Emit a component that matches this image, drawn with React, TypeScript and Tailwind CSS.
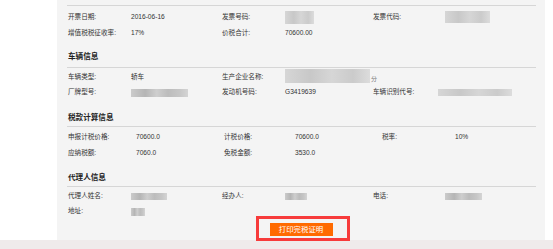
import React from "react";

const Blur = ({ w, h, dy = 0, light = false }: { w: number; h: number; dy?: number; light?: boolean }) => (
  <div
    className={
      "blur-[0.6px] " +
      (light
        ? "bg-[linear-gradient(90deg,#d6d6d6,#c8c8c8_30%,#d6d6d6_55%,#cbcbcb_80%,#dcdcdc)]"
        : "bg-[linear-gradient(90deg,#cbcbcb,#b5b5b5_25%,#cecece_45%,#bcbcbc_65%,#c6c6c6_85%,#d4d4d4)]")
    }
    style={{ width: w, height: h, marginTop: dy }}
  />
);

type Cell = React.ReactNode;

const Row = ({ cells, tax = false, h = "h-[15px]" }: { cells: Cell[]; tax?: boolean; h?: string }) => (
  <div
    className={
      "grid items-center text-[6.6px] leading-none text-[#333] " +
      h +
      " " +
      (tax ? "grid-cols-[68px_88px_71px_87px_73px_1fr]" : "grid-cols-[63px_91px_63px_88px_72px_1fr]")
    }
  >
    {cells.map((c, i) => (
      <div key={i} className="flex items-center whitespace-nowrap">
        {c}
      </div>
    ))}
  </div>
);

const Heading = ({ children, mt }: { children: React.ReactNode; mt: string }) => (
  <div className={"flex h-[14px] items-center text-[7.6px] font-bold leading-none text-[#222] " + mt}>{children}</div>
);

const Line = ({ mt }: { mt: string }) => <div className={"ml-[-1px] mr-[9px] h-px bg-[#d6d6d6] " + mt} />;

export default function App() {
  return (
    <div
      className="flex h-[249px] w-[553px] flex-col bg-white"
      style={{ fontFamily: '"Liberation Sans", "Noto Sans CJK SC", sans-serif' }}
    >
      <div className="flex h-[240px]">
        <div className="w-[57px] bg-white" />
        <div className="flex w-[488px] flex-col bg-[#f4f4f4] pl-[11px]">
          <div className="h-[5px]" />
          <Line mt="" />
          <div className="mt-[3px]">
            <Row h="h-[16px]" cells={["开票日期:", "2016-06-16", "发票号码:", <Blur w={29} h={13} light />, "发票代码:", <Blur w={45} h={12} light />]} />
            <Row h="h-[16px]" cells={["增值税税征收率:", "17%", "价税合计:", "70600.00", "", ""]} />
          </div>
          <Heading mt="mt-[9px]">车辆信息</Heading>
          <Line mt="mt-[3px]" />
          <div className="mt-[2px]">
            <Row
              cells={[
                "车辆类型:",
                "轿车",
                "生产企业名称:",
                <div className="flex items-center">
                  <Blur w={85} h={14} dy={-4} light />
                  <span className="ml-[1px] mt-[2px] text-[6px] text-[#777]">分</span>
                </div>,
                "",
                "",
              ]}
            />
            <Row cells={["厂牌型号:", <Blur w={57} h={8} />, "发动机号码:", "G3419639", "车辆识别代号:", <div className="-ml-[7px]"><Blur w={74} h={7} light /></div>]} />
          </div>
          <Heading mt="mt-[11px]">税款计算信息</Heading>
          <Line mt="mt-[1px]" />
          <div className="mt-[3px]">
            <Row tax cells={["申报计税价格:", "70600.0", "计税价格:", "70600.0", "税率:", "10%"]} />
            <Row tax h="h-[16px]" cells={["应纳税额:", "7060.0", "免税金额:", "3530.0", "", ""]} />
          </div>
          <Heading mt="mt-[10px]">代理人信息</Heading>
          <Line mt="mt-[1px]" />
          <div className="mt-[2px]">
            <Row cells={["代理人姓名:", <Blur w={36} h={7} />, "经办人:", <Blur w={22} h={7} />, "电话:", <Blur w={37} h={7} />]} />
            <Row cells={["地址:", <Blur w={14} h={8} />, "", "", "", ""]} />
          </div>
          <div className="relative mt-[4px] flex justify-center pr-[11px]">
            <div className="relative">
              <div className="flex h-[13px] w-[63px] items-center justify-center bg-[#ff6a00] text-[7.4px] leading-none text-white">
                打印完税证明
              </div>
              <div className="pointer-events-none absolute left-[-14px] top-[-7px] h-[25px] w-[94px] border-[3px] border-[#f73b3b]" />
            </div>
          </div>
        </div>
        <div className="flex-1 bg-white" />
      </div>
      <div className="h-[9px] bg-[#efebeb]" />
    </div>
  );
}
